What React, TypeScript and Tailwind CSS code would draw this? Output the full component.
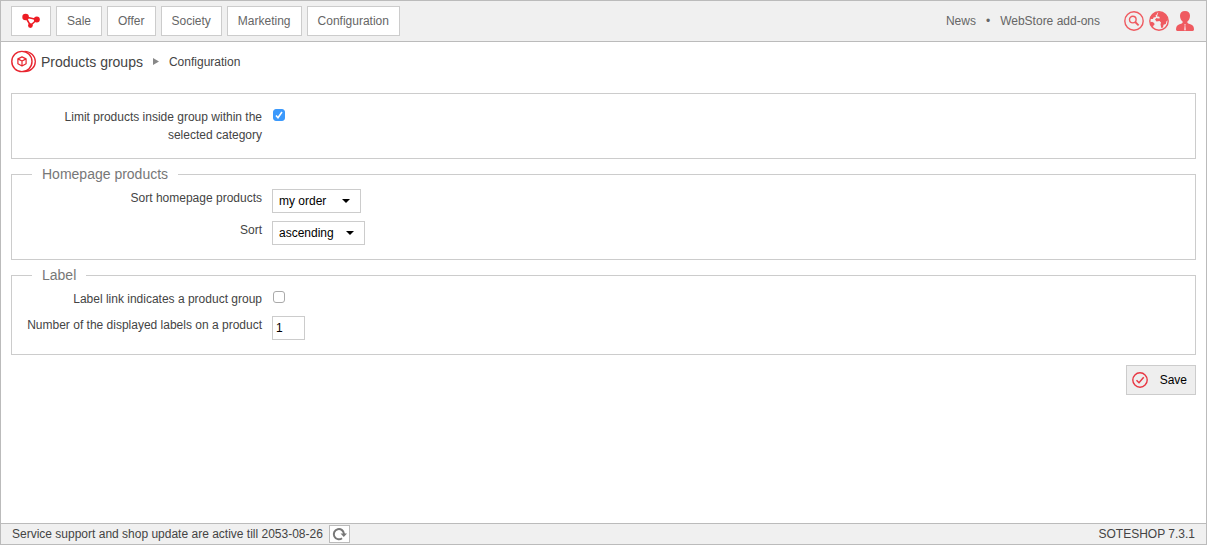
import { useState, type ReactNode } from 'react';

const menu = ['Sale', 'Offer', 'Society', 'Marketing', 'Configuration'];

const LogoIcon = () => (
    <svg width="18" height="16" viewBox="0 0 18 16" fill="#ed1c24">
        <path d="M3.5 4 15 6.500M3.5 4 8.500 12.500M15 6.500 8.500 12.500" stroke="#ed1c24" strokeWidth="1.5" />
        <circle cx="3.6" cy="4" r="3.3" />
        <circle cx="14.8" cy="6.6" r="3" />
        <circle cx="8.4" cy="12.6" r="2.4" />
    </svg>
);

const ProductsIcon = () => (
    <svg width="25" height="23" viewBox="0 0 25 23" fill="none" stroke="#e8252f">
        <circle cx="10.9" cy="11.5" r="10.1" strokeWidth="1.4" />
        <path d="M13.500 1.300C20 1.500 24.300 6 24.300 11.500S20 21.500 13.500 21.700" strokeWidth="1.3" />
        <path d="m11 6.900 4.100 2v4.800L11 16l-4.100-2.300V8.900zM6.900 8.900 11 11l4.100-2.100M11 11v5" strokeWidth="1.2" strokeLinejoin="round" />
    </svg>
);

const SearchIcon = () => (
    <svg width="20" height="20" viewBox="0 0 20 20" fill="none" stroke="#ef5a60">
        <circle cx="10" cy="10" r="9.2" strokeWidth="1.4" />
        <circle cx="8.8" cy="8.6" r="3.3" strokeWidth="1.4" />
        <path d="m11.2 11 3.400 3.400" strokeWidth="1.8" />
    </svg>
);

const GlobeIcon = () => (
    <svg width="20" height="20" viewBox="0 0 20 20" fill="#ef5a60">
        <circle cx="10" cy="10" r="9.2" fill="none" stroke="#ef5a60" strokeWidth="1.4" />
        <path d="M1 8C2 4 5 1.300 8.600 1L8 3.200 6.500 4.500 7 6l-2.500.5L4 8z" />
        <path d="M1 11.500l2-.8 2.200 1.300.3 1.800-1.500 1.200.5 1.500C2.500 15.500 1.200 13.500 1 11.500z" />
        <path d="M9.500 1C14.500.8 18.500 4.500 19 9l-1.500 1.200-.7 2.800-2.300.8-.5 2.700-1.700.5-.8-3.500.5-2-1.500-1.500-3 .5-1.500-2L7.500 7l1.500.5 2-.3-1-1.700-1.500.3-.3-1.300z" />
    </svg>
);

const UserIcon = () => (
    <svg width="18" height="20" viewBox="0 0 18 20" fill="#ef5a60">
        <path d="M9 0c3.200 0 5 1.800 5 4.700 0 2.500-1.100 4.700-2.600 5.900v1.200c.6.8 2 1.100 3.600 1.600 2 .8 3 2.200 3 5 0 1-1 1.600-2.400 1.600H2.400C1 20 0 19.400 0 18.400c0-2.800 1-4.200 3-5 1.600-.5 3-.8 3.600-1.600v-1.200C5.100 9.400 4 7.200 4 4.700 4 1.800 5.800 0 9 0z" />
        <path d="M8.300 13h1.400l-.3 1.500.6 4.300-1 1-1-1 .6-4.300z" fill="#f9c6c8" />
    </svg>
);

const SaveIcon = () => (
    <svg width="16" height="16" viewBox="0 0 16 16" fill="none" stroke="#e83743">
        <circle cx="8" cy="8" r="7.2" strokeWidth="1.4" />
        <path d="m4.500 8.200 2.500 2.500 4.700-5.500" strokeWidth="1.5" />
    </svg>
);

const RefreshIcon = () => (
    <svg width="15" height="14" viewBox="0 0 15 14" fill="none">
        <path d="M10 11.200A5.100 5.100 0 1 1 12 7" stroke="#777" strokeWidth="2" />
        <path d="M8.500 6.500H15L11.800 10z" fill="#777" />
    </svg>
);

const Row = ({ id, label, children }: { id: string; label: string; children: ReactNode }) => (
    <div className="flex items-start gap-[10px]">
        <label htmlFor={id} className="w-60 shrink-0 text-right">
            {label}
        </label>
        {children}
    </div>
);

const Checkbox = ({ id, defaultChecked = false }: { id: string; defaultChecked?: boolean }) => (
    <span className="relative mt-px ml-px block size-3">
        <input
            id={id}
            type="checkbox"
            defaultChecked={defaultChecked}
            className="peer block size-3 appearance-none rounded-[3px] border border-[#aaa] bg-white checked:border-[#3b99fc] checked:bg-[#3b99fc]"
        />
        <svg
            className="pointer-events-none absolute inset-0 hidden peer-checked:block"
            width="12"
            height="12"
            viewBox="0 0 12 12"
            fill="none"
        >
            <path d="m3 6.400 2 2.300 4-5.700" stroke="#fff" strokeWidth="1.6" />
        </svg>
    </span>
);

const Select = ({ id, options, width }: { id: string; options: string[]; width: string }) => (
    <span className="relative">
        <select
            id={id}
            className={`block h-6 appearance-none border border-[#ccc] bg-white pl-[6px] leading-[18px] text-black ${width}`}
        >
            {options.map((option) => (
                <option key={option}>{option}</option>
            ))}
        </select>
        <svg className="pointer-events-none absolute top-[10px] right-[11px]" width="8" height="4" viewBox="0 0 8 4">
            <path d="M0 0h8L4 4z" />
        </svg>
    </span>
);

const Group = ({ title, children }: { title: string; children: ReactNode }) => (
    <fieldset className="mt-[6px] border border-[#ccc] px-[10px] pt-[6px] pb-[14px]">
        <legend className="ml-[10px] px-[10px] text-sm leading-[18px] text-[#777]">{title}</legend>
        <div className="flex flex-col gap-2">{children}</div>
    </fieldset>
);

const App = () => {
    const [labels, setLabels] = useState('1');

    return (
        <div className="flex min-h-screen flex-col border border-[#bbb] bg-white font-['Liberation_Sans',Arial,sans-serif] text-xs leading-[18px] text-[#444]">
            <header className="flex items-center justify-between border-b border-[#bbb] bg-[#f0f0f0] pr-3 pl-[10px] py-[5px] text-[#666]">
                <nav className="flex gap-[5px]">
                    <a href="#" aria-label="Home" className="flex h-[30px] w-10 items-center justify-center border border-[#ccc] bg-white">
                        <LogoIcon />
                    </a>
                    {menu.map((item) => (
                        <a key={item} href="#" className="flex h-[30px] items-center border border-[#ccc] bg-white px-[10px]">
                            {item}
                        </a>
                    ))}
                </nav>

                <div className="flex items-center">
                    <a href="#">News</a>
                    <span className="mx-[10px]">•</span>
                    <a href="#">WebStore add-ons</a>
                    <div className="ml-6 flex items-center gap-[5px]">
                        <button type="button" aria-label="Search"><SearchIcon /></button>
                        <button type="button" aria-label="Language"><GlobeIcon /></button>
                        <button type="button" aria-label="Account" className="ml-[2px]"><UserIcon /></button>
                    </div>
                </div>
            </header>

            <main className="flex grow flex-col px-[10px] pt-2">
                <div className="flex items-center">
                    <ProductsIcon />
                    <h1 className="ml-[5px] text-sm leading-[18px]">Products groups</h1>
                    <svg className="mx-[10px]" width="6" height="7" viewBox="0 0 6 7" fill="#888">
                        <path d="M0 0v7l6-3.500z" />
                    </svg>
                    <a href="#">Configuration</a>
                </div>

                <form className="mt-5" onSubmit={(e) => e.preventDefault()}>
                    <div className="border border-[#ccc] px-[10px] py-[14px]">
                        <Row id="limit" label="Limit products inside group within the selected category">
                            <Checkbox id="limit" defaultChecked />
                        </Row>
                    </div>

                    <Group title="Homepage products">
                        <Row id="sort-by" label="Sort homepage products">
                            <Select id="sort-by" options={['my order', 'name', 'price']} width="w-[89px]" />
                        </Row>
                        <Row id="sort" label="Sort">
                            <Select id="sort" options={['ascending', 'descending']} width="w-[93px]" />
                        </Row>
                    </Group>

                    <Group title="Label">
                        <Row id="label-link" label="Label link indicates a product group">
                            <Checkbox id="label-link" />
                        </Row>
                        <Row id="label-count" label="Number of the displayed labels on a product">
                            <input
                                id="label-count"
                                type="text"
                                value={labels}
                                onChange={(e) => setLabels(e.target.value)}
                                className="h-6 w-[33px] border border-[#ccc] px-[3px] text-black"
                            />
                        </Row>
                    </Group>

                    <div className="mt-[10px] flex justify-end">
                        <button type="submit" className="flex h-[30px] items-center gap-3 border border-[#ccc] bg-[#eee] pr-2 pl-[5px] text-black">
                            <SaveIcon />
                            Save
                        </button>
                    </div>
                </form>
            </main>

            <footer className="flex items-center justify-between border-t border-[#bbb] bg-[#f0f0f0] px-[11px] py-px">
                <div className="flex items-center gap-[6px]">
                    <span>Service support and shop update are active till 2053-08-26</span>
                    <button type="button" aria-label="Refresh" className="flex h-[18px] w-[21px] items-center justify-center border border-[#bbb] bg-white">
                        <RefreshIcon />
                    </button>
                </div>
                <span>SOTESHOP 7.3.1</span>
            </footer>
        </div>
    );
};

export default App;
